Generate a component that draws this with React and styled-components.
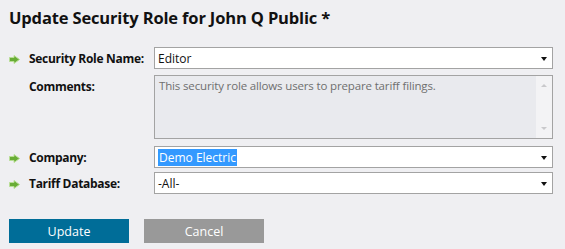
import React from "react";
import styled, { createGlobalStyle } from "styled-components";

const Global = createGlobalStyle`
  html, body { margin: 0; padding: 0; background: #efeff2; }
  body { font-family: "Open Sans", "Noto Sans", sans-serif; color: #000; }
`;

const Page = styled.div`
  padding: 6px 9px 0 9px;
  width: 565px;
  box-sizing: border-box;
`;

const Title = styled.h1`
  margin: 0;
  font-size: 16.5px;
  font-weight: 700;
  line-height: 24px;
  letter-spacing: -0.15px;
  color: #111;
`;

const Form = styled.div`
  margin-top: 17px;
  display: grid;
  grid-template-columns: 145px 399px;
  row-gap: 0;
`;

const LabelCell = styled.div`
  display: flex;
  align-items: flex-start;
  gap: 9px;
  padding-top: 4px;
  padding-left: 0;
  margin-top: ${(p) => p.$gap || 0}px;
  font-size: 12px;
  font-weight: 700;
  line-height: 16px;
  letter-spacing: -0.3px;
  color: #111;
`;

const ArrowSlot = styled.span`
  width: 11px;
  height: 16px;
  display: flex;
  align-items: center;
  flex: none;
`;

const SelectBox = styled.div`
  position: relative;
  height: 22px;
  box-sizing: border-box;
  border: 1px solid #a3a3a3;
  background: #fff;
  display: flex;
  align-items: center;
  padding-left: 3px;
  font-size: 12px;
  color: #111;
  margin-top: ${(p) => p.$gap || 0}px;
`;

const Caret = styled.span`
  position: absolute;
  right: 5px;
  top: 9px;
  width: 0;
  height: 0;
  border-left: 3px solid transparent;
  border-right: 3px solid transparent;
  border-top: 4px solid #111;
`;

const Selected = styled.span`
  background: #3399ff;
  color: #fff;
  padding: 0 1px;
  line-height: 17px;
`;

const TextArea = styled.div`
  height: 64px;
  box-sizing: border-box;
  border: 1px solid #a3a3a3;
  background: #e9eaee;
  display: flex;
  margin-top: ${(p) => p.$gap || 0}px;
`;

const AreaText = styled.div`
  flex: 1;
  padding: 2px 4px;
  font-size: 11.5px;
  line-height: 15px;
  letter-spacing: -0.15px;
  color: #6f6f6f;
`;

const Scrollbar = styled.div`
  width: 16px;
  background: #f3f3f5;
  display: flex;
  flex-direction: column;
  justify-content: space-between;
  align-items: center;
  padding: 8px 0 8px;
`;

const ScrollArrow = styled.span`
  width: 0;
  height: 0;
  border-left: 3px solid transparent;
  border-right: 3px solid transparent;
  ${(p) =>
    p.$up
      ? "border-bottom: 3px solid #c9c9cc;"
      : "border-top: 3px solid #c9c9cc;"}
`;

const Buttons = styled.div`
  display: flex;
  gap: 15px;
  margin-top: 25px;
`;

const Button = styled.button`
  width: 120px;
  height: 24px;
  border: none;
  margin: 0;
  padding: 0;
  font-family: inherit;
  font-size: 12.5px;
  color: #fff;
  background: ${(p) => (p.$primary ? "#006d98" : "#999999")};
`;

const GreenArrow = () => (
  <svg width="11" height="9" viewBox="0 0 11 9">
    <path
      d="M0.5 2.5 H5 V0.5 L10.5 4.5 L5 8.5 V6.5 H0.5 Z"
      fill="#69ad36"
      stroke="#b9de96"
      strokeWidth="1"
    />
  </svg>
);

const Label = ({ arrow, gap, children }) => (
  <LabelCell $gap={gap}>
    <ArrowSlot>{arrow && <GreenArrow />}</ArrowSlot>
    <span>{children}</span>
  </LabelCell>
);

export default function App() {
  return (
    <Page>
      <Global />
      <Title>Update Security Role for John Q Public *</Title>
      <Form>
        <Label arrow>Security Role Name:</Label>
        <SelectBox>
          Editor
          <Caret />
        </SelectBox>

        <Label gap={6}>Comments:</Label>
        <TextArea $gap={6}>
          <AreaText>This security role allows users to prepare tariff filings.</AreaText>
          <Scrollbar>
            <ScrollArrow $up />
            <ScrollArrow />
          </Scrollbar>
        </TextArea>

        <Label arrow gap={7}>Company:</Label>
        <SelectBox $gap={7}>
          <Selected>Demo Electric</Selected>
          <Caret />
        </SelectBox>

        <Label arrow gap={4}>Tariff Database:</Label>
        <SelectBox $gap={4}>
          -All-
          <Caret />
        </SelectBox>
      </Form>
      <Buttons>
        <Button $primary>Update</Button>
        <Button>Cancel</Button>
      </Buttons>
    </Page>
  );
}
